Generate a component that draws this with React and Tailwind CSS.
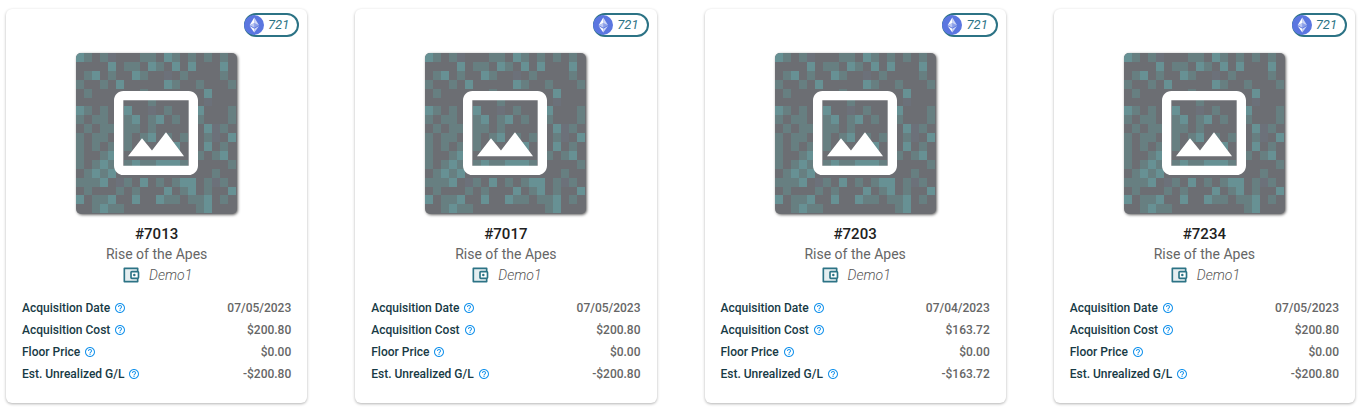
import React from 'react';

const tokens = [
  { id: '7013', date: '07/05/2023', cost: '200.80' },
  { id: '7017', date: '07/05/2023', cost: '200.80' },
  { id: '7203', date: '07/04/2023', cost: '163.72' },
  { id: '7234', date: '07/05/2023', cost: '200.80' },
];

// one character per pixel block: m = mid teal, L = light teal, p = faint
const pixels = [
  'Lm.mp...mm.Lm.m.m.m.',
  '....L.mm.Lm.L.L...L.',
  '.mL.m..Lm..p.m....m.',
  'm..m.L.....Lm..m...m',
  '.m......m.......L...',
  '.........m......p...',
  'Lm.m..L..p.m...L...m',
  'm.mm..mL.mL.m..m...m',
  '.m.mm.mm.m......Lpm.',
  'm.mm..m.mL.m.m..mp.L',
  'm.m.m.m.....L...L.m.',
  'm..mL..........m.mL.',
  'm.mLm.mLmmLLLm.....m',
  '.mLmL............m..',
  'mmmL.pm.L.m.mLL.mpm.',
  '.m...m.m...L.mL.m..L',
  'L.mmL..L..Lmm.mmL.m.',
  '..mLmm.........mL...',
];

const blockColors = { m: '#677f81', L: '#679194', p: '#6c717a' };

const Placeholder = () => (
  <svg viewBox="0 0 161 161" className="size-[161px] rounded-[5px] bg-[#6c6e73] shadow-[1px_1px_3px_rgba(0,0,0,0.6)]" role="img" aria-label="NFT">
    <g shapeRendering="crispEdges">
      {pixels.map((row, y) =>
        row.split('').map((c, x) =>
          c === '.' ? null : (
            <rect key={`${x}-${y}`} x={x * 8} y={y * 8.9} width="8" height="8.9" fill={blockColors[c]} />
          )
        )
      )}
    </g>
    <path
      transform="translate(24 24) scale(4.667)"
      fill="#fff"
      d="M19 5v14H5V5h14m0-2H5c-1.1 0-2 .9-2 2v14c0 1.1.9 2 2 2h14c1.1 0 2-.9 2-2V5c0-1.1-.9-2-2-2zm-4.86 8.86-3 3.87L9 13.14 6 17h12l-3.86-5.14z"
    />
  </svg>
);

const EthIcon = () => (
  <svg viewBox="0 0 32 32" className="size-5 -ml-0.5">
    <circle cx="16" cy="16" r="16" fill="#5b76e0" />
    <g fill="#fff">
      <path fillOpacity=".7" d="M16.5 4v8.87l7.5 3.35z" />
      <path d="M16.5 4 9 16.22l7.5-3.35z" />
      <path fillOpacity=".7" d="M16.5 21.97V28L24 17.62z" />
      <path d="M16.5 28v-6.03L9 17.62z" />
      <path fillOpacity=".3" d="m16.5 20.57 7.5-4.35-7.5-3.35z" />
      <path fillOpacity=".6" d="m9 16.22 7.5 4.35v-7.7z" />
    </g>
  </svg>
);

const WalletIcon = () => (
  <svg viewBox="0 0 24 24" className="size-5" fill="#2c7385">
    <path opacity=".12" d="M5 5h14v2h-6c-1.1 0-2 .9-2 2v6c0 1.1.9 2 2 2h6v2H5z" />
    <path d="M21 7.28V4c0-.55-.45-1-1-1H4c-.55 0-1 .45-1 1v16c0 .55.45 1 1 1h16c.55 0 1-.45 1-1v-3.28c.59-.35 1-.98 1-1.72V9c0-.74-.41-1.37-1-1.72zM20 9v6h-7V9h7zM5 19V5h14v2h-6c-1.1 0-2 .9-2 2v6c0 1.1.9 2 2 2h6v2H5z" />
    <circle cx="16" cy="12" r="1.5" />
  </svg>
);

const HelpIcon = () => (
  <svg viewBox="0 0 24 24" className="size-3" fill="#1693ec">
    <path d="M11 18h2v-2h-2v2zm1-16C6.48 2 2 6.48 2 12s4.48 10 10 10 10-4.48 10-10S17.52 2 12 2zm0 18c-4.41 0-8-3.59-8-8s3.59-8 8-8 8 3.59 8 8-3.59 8-8 8zm0-14c-2.21 0-4 1.79-4 4h2c0-1.1.9-2 2-2s2 .9 2 2c0 2-3 1.75-3 5h2c0-2.25 3-2.5 3-5 0-2.21-1.79-4-4-4z" />
  </svg>
);

const Row = ({ label, value }) => (
  <div className="flex items-center justify-between text-xs leading-[22px] font-medium">
    <dt className="flex items-center gap-1 text-[#173a45]">
      {label}
      <button type="button" aria-label={`About ${label}`} className="cursor-pointer">
        <HelpIcon />
      </button>
    </dt>
    <dd className="text-[#666]">{value}</dd>
  </div>
);

const TokenCard = ({ token }) => (
  <article className="rounded-md bg-white pt-1 pb-[18px] shadow-[0_1px_3px_rgba(0,0,0,0.3)]">
    <div className="flex justify-end pr-2">
      <span className="flex h-6 items-center gap-1 rounded-full border-2 border-[#2c7385] pr-2 text-[13px] italic text-[#2c7385]">
        <EthIcon />
        721
      </span>
    </div>
    <div className="mt-4 flex flex-col items-center">
      <Placeholder />
      <h2 className="mt-2.5 text-[15px] leading-5 font-medium text-[#212121]">#{token.id}</h2>
      <p className="text-sm leading-5 text-[#666]">Rise of the Apes</p>
      <p className="flex items-center gap-2 text-sm leading-[22px] font-light text-[#555] italic">
        <WalletIcon />
        Demo1
      </p>
    </div>
    <dl className="mt-[11px] px-4">
      <Row label="Acquisition Date" value={token.date} />
      <Row label="Acquisition Cost" value={`$${token.cost}`} />
      <Row label="Floor Price" value="$0.00" />
      <Row label="Est. Unrealized G/L" value={`-$${token.cost}`} />
    </dl>
  </article>
);

const App = () => (
  <main className="grid grid-cols-4 gap-12 bg-white pt-[9px] pr-2.5 pb-2.5 pl-1.5 font-[Roboto,sans-serif]">
    {tokens.map(token => (
      <TokenCard key={token.id} token={token} />
    ))}
  </main>
);

export default App;
